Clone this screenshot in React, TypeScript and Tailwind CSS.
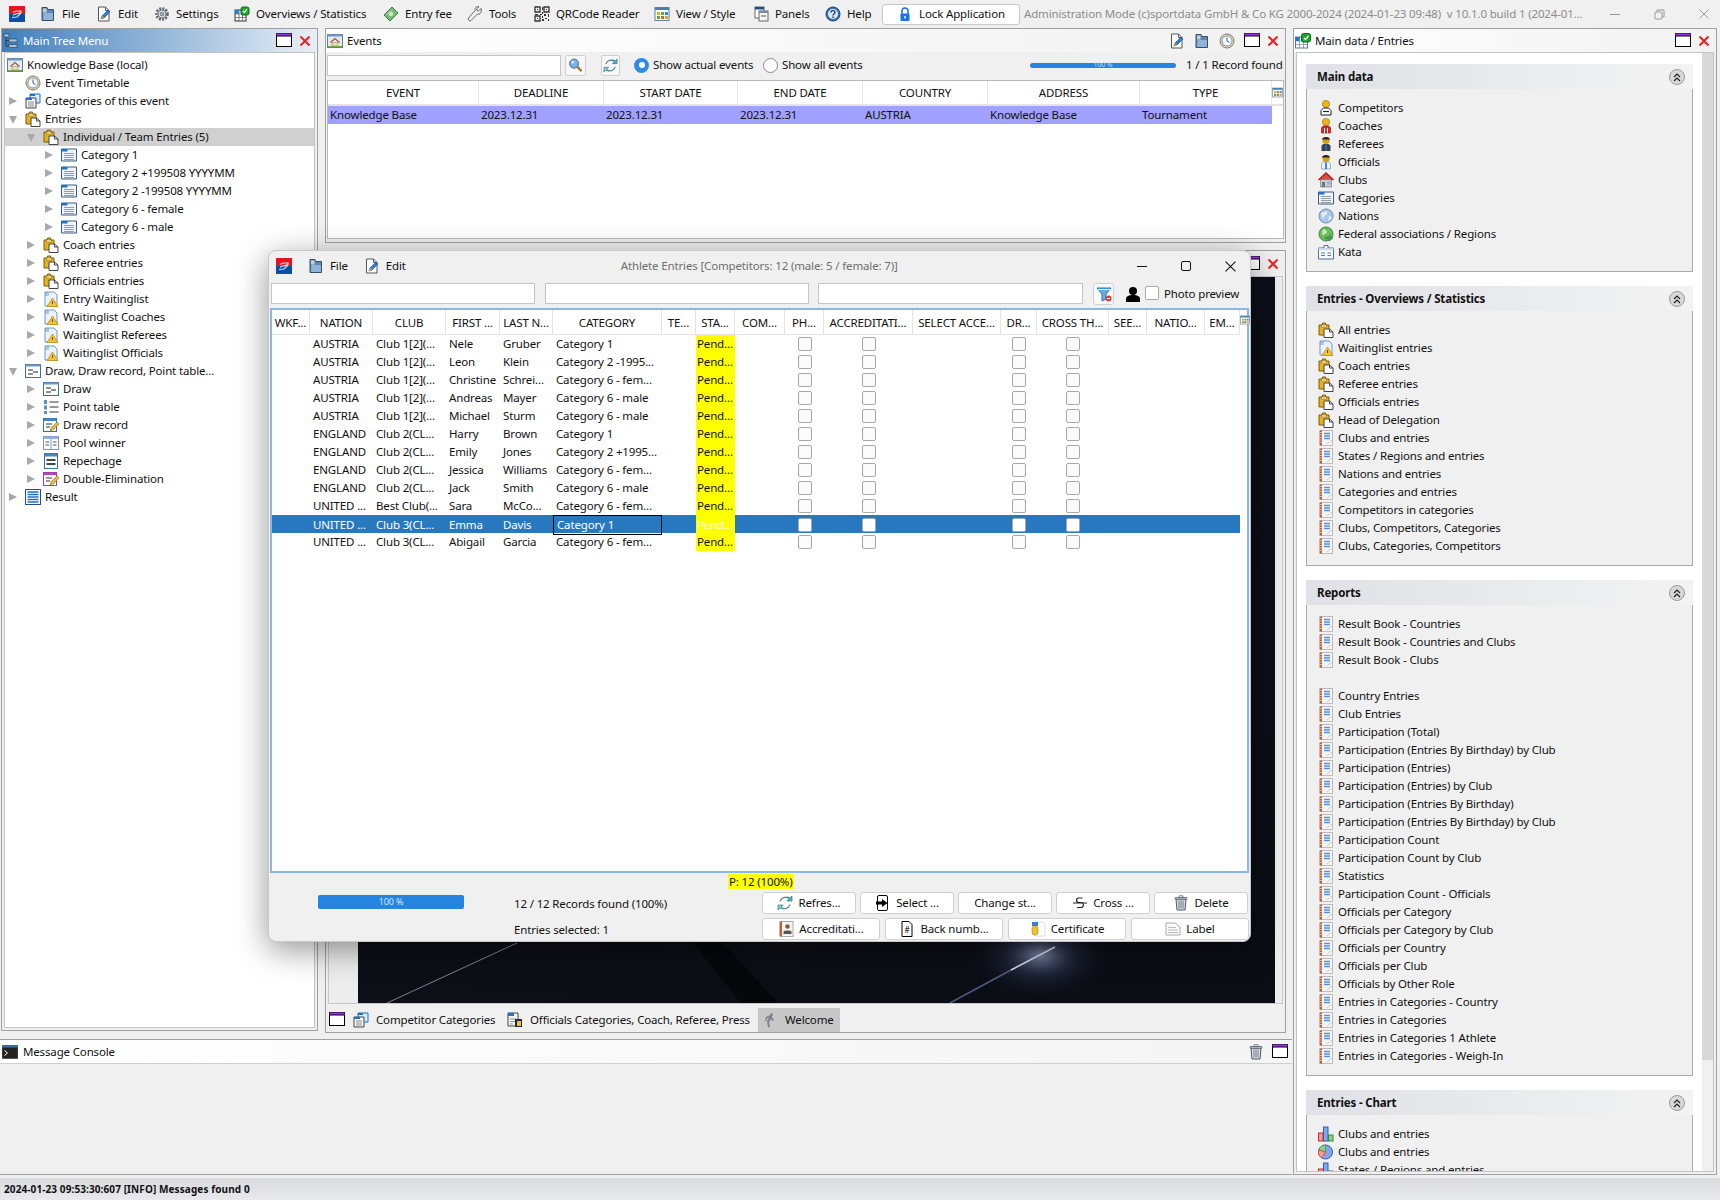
import type { ReactNode } from "react";

type IconName =
  | "logo" | "file" | "edit" | "gear" | "overview" | "money" | "wrench" | "qr" | "view" | "panels" | "help" | "lock"
  | "home" | "clock" | "cats" | "clip" | "cat" | "warn" | "draw" | "point" | "record" | "pool" | "repechage" | "double" | "result"
  | "tree" | "competitor" | "coach" | "referee" | "official" | "club" | "nation" | "federal" | "kata" | "report" | "bar" | "pie"
  | "console" | "trash" | "tile" | "search" | "refresh" | "filter" | "person" | "selectIn" | "cross" | "accred" | "back" | "medal" | "label" | "run" | "catCoach" | "mainData";

function Icon({ name, className = "h-4 w-4 shrink-0" }: { name: IconName; className?: string }) {
  const shapes: Record<IconName, ReactNode> = {
    logo: <><rect width="16" height="8" fill="#e8141c" /><rect y="8" width="16" height="8" fill="#0b4ea2" /><path d="M4 9l8-2.4V5L7 5 4 6.500M12 7 8 11l-5 .5" stroke="#d8dce4" strokeWidth="1.2" fill="none" /></>,
    file: <><path d="M2 1.500h5l1 2h5.500v11H2z" fill="#5d86b3" stroke="#3a4d63" /><path d="M3 2.500h3.500v4H3z" fill="#c9ced6" /><path d="M3.500 7h9.500v7H3z" fill="#8fb3d9" /></>,
    edit: <><path d="M2.500 1h7l3.500 3.500V15h-10.500z" fill="#fff" stroke="#555" /><path d="M9.500 1v3.500H13" fill="none" stroke="#555" /><path d="M5 13l1-3 6-6 2 2-6 6z" fill="#2f7fd8" stroke="#1d4f8c" strokeWidth=".6" /><path d="M5 13l1-3 2 2z" fill="#e6a73a" /></>,
    gear: <><circle cx="8" cy="8" r="5.500" fill="none" stroke="#5d6670" strokeWidth="2.600" strokeDasharray="2 1.200" /><circle cx="8" cy="8" r="4" fill="#eef0f2" stroke="#6d747c" /><circle cx="8" cy="8" r="2" fill="#aab0b6" stroke="#555" strokeWidth=".6" /></>,
    overview: <><rect x="1" y="4" width="11" height="11" fill="#fff" stroke="#333" /><path d="M1 8h11M1 11.500h11M5 4v11M8.500 4v11" stroke="#555" strokeWidth=".7" /><rect x="1" y="4" width="4" height="4" fill="#2e7fd6" /><rect x="7" y="1" width="8" height="8" rx="2" fill="#1fa62f" stroke="#0c6a18" /><path d="M9 5l1.500 1.500L13 3" stroke="#fff" fill="none" strokeWidth="1.200" /></>,
    money: <><path d="M1 9L9 1l6 6-8 8z" fill="#7cb77a" stroke="#3d7f45" /><circle cx="8" cy="8" r="2.200" fill="#cfe8c8" /><path d="M3.500 9 9 3.500" stroke="#cfe8c8" strokeWidth=".7" /></>,
    wrench: <path d="M14 2.500l-2.500 2.500-1.500-.5-.5-1.500L12 .8C9.500 0 7.500 2 8 4.500L1.500 12a1.800 1.800 0 0 0 2.500 2.500L10.500 8c2.500.7 4.500-1.500 3.500-5.500z" fill="#f2f2f2" stroke="#555" strokeWidth=".9" />,
    qr: <><path d="M1 1h5v5H1zM10 1h5v5h-5zM1 10h5v5H1z" fill="none" stroke="#333" strokeWidth="1.300" /><path d="M3 3h1v1H3zM12 3h1v1h-1zM3 12h1v1H3zM8 1h1v3H8zM8 6h1v2H8zM1 8h3v1H1zM6 8h2v1H6zM10 8h2v2h-2zM14 8h1v3h-1zM8 10h1v2H8zM11 12h2v1h-2zM8 13h2v2H8zM14 13h1v2h-1z" fill="#333" /></>,
    view: <><rect x="1" y="1.500" width="14" height="13" fill="#fff" stroke="#5d7fa6" /><rect x="1" y="1.500" width="14" height="2.500" fill="#4a7cb3" /><rect x="3" y="6" width="3" height="3" fill="#e0a92e" /><rect x="7" y="6" width="3" height="3" fill="#55a84f" /><rect x="11" y="6" width="3" height="3" fill="#4a84d0" /><rect x="3" y="10" width="3" height="3" fill="#55a84f" /><rect x="7" y="10" width="3" height="3" fill="#d25b4b" /><rect x="11" y="10" width="3" height="3" fill="#e0a92e" /></>,
    panels: <><rect x="2" y="1" width="9" height="11" fill="#fff" stroke="#666" /><rect x="2" y="1" width="9" height="2.500" fill="#1f4f86" /><rect x="6" y="5" width="9" height="10" fill="#f6f6f6" stroke="#666" /><rect x="6" y="5" width="9" height="2" fill="#7a8aa0" /><path d="M8 10h5" stroke="#555" /></>,
    help: <><circle cx="8" cy="8" r="7" fill="#3d74b8" stroke="#1d3f6e" /><circle cx="8" cy="8" r="5" fill="#d8e6f5" /><path d="M6 6.500c0-2.500 4-2.500 4 0 0 1.500-2 1.500-2 3" stroke="#1d3f6e" strokeWidth="1.400" fill="none" /><rect x="7.300" y="10.500" width="1.500" height="1.500" fill="#1d3f6e" /></>,
    lock: <><path d="M5 8V5a3 3 0 0 1 6 0v3" fill="none" stroke="#1a73e8" strokeWidth="1.500" /><rect x="3.500" y="7.500" width="9" height="7.500" rx="1" fill="#1a73e8" /><rect x="7.300" y="10" width="1.400" height="2.500" fill="#fff" /></>,
    home: <><rect x=".5" y="1.500" width="15" height="13" fill="#dfeaf5" stroke="#5d7fa6" /><rect x=".5" y="1.500" width="15" height="2" fill="#6f9ac8" /><path d="M3.500 9.500 8 5.500l4.500 4" fill="none" stroke="#b9522c" strokeWidth="1.300" /><path d="M5 9.500h6v3.500H5z" fill="#f1dfa8" stroke="#8a7a4a" strokeWidth=".5" /><path d="M1 13.500h14" stroke="#6bad56" /></>,
    clock: <><circle cx="8" cy="8" r="7" fill="#e4d6b8" stroke="#8a7a5a" /><circle cx="8" cy="8" r="5" fill="#fff" stroke="#6f9ac8" /><path d="M8 4.500V8l2.500 1.500" stroke="#2a5c99" fill="none" /></>,
    cats: <><path d="M5 1h10v9H5z" fill="#dce9f7" stroke="#1f74c9" /><path d="M5 1h5v2H5z" fill="#1f74c9" /><path d="M1 5h10v10H1z" fill="#f4f6f8" stroke="#444" /><path d="M1 5h6v2H1z" fill="#1f74c9" /><path d="M3 9h6M3 11h6M3 13h6" stroke="#777" strokeWidth=".8" /></>,
    clip: <><path d="M1 3h3l.5-2h3l.5 2h3v10H1z" fill="#e5b11e" stroke="#7d5e08" /><path d="M3.500 3h5v2h-5z" fill="#f7f2d8" stroke="#7d5e08" strokeWidth=".5" /><path d="M6 7h5.500L15 10v5.500H6z" fill="#fff" stroke="#444" /><path d="M11.500 7v3H15" fill="none" stroke="#444" /></>,
    cat: <><path d="M.5 2h15v12H.5z" fill="#eef4fa" stroke="#3a5f86" /><path d="M.5 2h6v2.500h-6z" fill="#1f74c9" /><path d="M3 6.500h10M3 8.500h10M3 10.500h10M3 12.500h10" stroke="#7a8794" strokeWidth=".8" /></>,
    warn: <><path d="M2 1h9l3 3v11H2z" fill="#eaf2fb" stroke="#6f9ac8" /><path d="M2 1h4v4H2z" fill="#6f9ac8" opacity=".5" /><path d="M9.500 7l5.500 8.500H4z" fill="#f4c430" stroke="#b5860c" strokeWidth=".7" /><path d="M9.500 10v3" stroke="#6d4d00" /></>,
    draw: <><rect x=".5" y="1.500" width="15" height="13" fill="#fff" stroke="#3a6ea5" /><rect x=".5" y="1.500" width="15" height="2" fill="#6f9ac8" /><path d="M3 7h5M3 11h5M8 9h5" stroke="#222" strokeWidth="1.200" /></>,
    point: <><path d="M6.500 3h9M6.500 8h9M6.500 13h9" stroke="#333" strokeWidth="1.100" /><path d="M1 1h3v4H1zM1 6.500h3v4H1zM1 12h3v3H1z" fill="#5b8fd0" /></>,
    record: <><rect x=".5" y="1.500" width="13" height="13" fill="#fff" stroke="#3a6ea5" /><rect x=".5" y="1.500" width="13" height="2.500" fill="#4a84c4" /><path d="M3 7h6M3 10h4" stroke="#333" /><path d="M7 14l1-3 6-6 2 2-6 6z" fill="#e9b83a" stroke="#9a7312" strokeWidth=".6" /></>,
    pool: <><rect x=".5" y="1.500" width="15" height="13" fill="#fff" stroke="#6f9ac8" /><rect x=".5" y="1.500" width="15" height="2.500" fill="#8fb3d9" /><path d="M8 4v10" stroke="#6f9ac8" /><path d="M2.500 7h3.500M2.500 10h3.500M10 7h3.500M10 10h3.500" stroke="#555" /></>,
    repechage: <><rect x="1.500" y=".5" width="13" height="15" fill="#fff" stroke="#3a6ea5" /><rect x="1.500" y=".5" width="13" height="3" fill="#4a84c4" /><path d="M3.500 7h9M3.500 11h9" stroke="#444" strokeWidth="2" /></>,
    double: <><rect x=".5" y="1.500" width="13" height="13" fill="#fff" stroke="#a13ea8" /><rect x=".5" y="1.500" width="13" height="2.500" fill="#b83fc0" /><path d="M3 7h6M3 10h4" stroke="#333" /><path d="M7 14l1-3 6-6 2 2-6 6z" fill="#e9b83a" stroke="#9a7312" strokeWidth=".6" /></>,
    result: <><rect x=".5" y=".5" width="15" height="15" fill="#fff" stroke="#1f4f86" /><path d="M2.500 3h11M2.500 5.500h11M2.500 8h11M2.500 10.500h11M2.500 13h11" stroke="#1f74c9" strokeWidth="1.400" /></>,
    tree: <><rect x="1" y="1" width="5" height="3" fill="#a9c2dc" stroke="#22384f" strokeWidth=".6" /><rect x="6" y="6" width="8" height="3" fill="#a9c2dc" stroke="#22384f" strokeWidth=".6" /><rect x="6" y="11.500" width="8" height="3" fill="#a9c2dc" stroke="#22384f" strokeWidth=".6" /><path d="M3 4v9h3M3 7.500h3" stroke="#22384f" fill="none" /></>,
    competitor: <><circle cx="8" cy="4" r="3.600" fill="#edb612" stroke="#8a6a00" strokeWidth=".6" /><path d="M3 15v-4.500L5.500 8h5L13 10.500V15z" fill="#fff" stroke="#222" /><path d="M5 11.500h6" stroke="#222" strokeWidth="1.200" /></>,
    coach: <><circle cx="8" cy="4" r="3.600" fill="#edb612" stroke="#8a6a00" strokeWidth=".6" /><path d="M3.500 15V9.500L5.500 8h5l2 1.500V15z" fill="#d9261c" stroke="#7a120c" strokeWidth=".6" /><path d="M6.500 10v5M9.500 10v5" stroke="#fff" /></>,
    referee: <><circle cx="8" cy="4.500" r="3.600" fill="#d4a017" /><path d="M4 3.500c0-3.500 8-3.500 8 0z" fill="#222" /><path d="M3.500 15V9.500L5.500 8h5l2 1.500V15z" fill="#3c4048" /><path d="M8 8.500v6.500" stroke="#1f74c9" strokeWidth="1.600" /></>,
    official: <><circle cx="8" cy="4.500" r="3.600" fill="#d4a017" /><path d="M4 3.500c0-3.500 8-3.500 8 0z" fill="#222" /><path d="M3.500 15V9.500L5.500 8h5l2 1.500V15z" fill="#eaf1f8" stroke="#6f8296" strokeWidth=".6" /><path d="M8 8.500v6.500" stroke="#1f74c9" strokeWidth="1.600" /></>,
    club: <><path d="M.5 8 8 1l7.500 7" fill="#e04a3a" stroke="#b0201a" strokeWidth="1.300" /><path d="M2.500 7.500h11V15h-11z" fill="#c9ccd0" stroke="#666" strokeWidth=".6" /><rect x="4" y="10" width="3" height="5" fill="#6d7680" /><rect x="9" y="9.500" width="3.500" height="3" fill="#8fb3d9" /></>,
    nation: <><circle cx="8" cy="8" r="7" fill="#a9c8ea" stroke="#6b8cae" /><path d="M4 4c2 1 3 0 4-1 2 1 1 3 0 4-2 0-3 2-2 4-2-1-3-4-2-7zM11 8c2 0 3 1 2.500 2-1 2-2 2.500-3 3 0-2 .5-3 .5-5z" fill="#e8eef6" /></>,
    federal: <><circle cx="8" cy="8" r="7" fill="#6cbb5c" stroke="#3d8a40" /><path d="M5 3c2 0 4 1 4 3s-3 2-4 3-1-4 0-6z" fill="#c7e6ba" /><path d="M7.500 11h4V9l3.500 3-3.500 3v-2h-4z" fill="#4aa04e" stroke="#2f7a34" strokeWidth=".5" /></>,
    kata: <><path d="M.5 4h15v11H.5z" fill="#f6f8fb" stroke="#526f8e" /><path d="M6 4V1.500h4V4" fill="#fff" stroke="#526f8e" /><path d="M.5 4h15v2H.5z" fill="#c7d8ea" /><path d="M3 9h4M3 11.500h4M9.500 9h3.500M9.500 11.500h3.500" stroke="#5d7fa6" /></>,
    report: <><rect x="2.500" y=".5" width="12" height="15" fill="#f4f4f4" stroke="#bbb" /><rect x="1.500" y=".5" width="2.500" height="15" fill="#b8623a" /><path d="M1.500 2.500h2.500M1.500 5h2.500M1.500 7.500h2.500M1.500 10h2.500M1.500 12.500h2.500" stroke="#f2e3d8" strokeWidth=".7" /><path d="M6 3.500h6M6 6h6M6 8.500h6" stroke="#5b8fd0" strokeWidth="1.300" /><path d="M9 14l5-4" stroke="#ccc" /></>,
    bar: <><rect x=".5" y="7" width="4.500" height="8" fill="#f59a95" stroke="#d9261c" /><rect x="5.500" y="1" width="4.500" height="14" fill="#7fa8e8" stroke="#2a5fc0" /><rect x="10.500" y="9" width="4.500" height="6" fill="#8fce8a" stroke="#2f8a34" /></>,
    pie: <><circle cx="7.500" cy="8" r="7" fill="#7fa8e8" stroke="#2a5fc0" /><path d="M7.500 8V1A7 7 0 0 0 .8 6z" fill="#8fce8a" stroke="#2f8a34" strokeWidth=".6" /><path d="M7.500 8 .8 6a7 7 0 0 0 3 8z" fill="#f59a95" stroke="#d9261c" strokeWidth=".6" /></>,
    console: <><rect y="1.500" width="16" height="13" rx="1" fill="#222" stroke="#555" /><rect y="1.500" width="16" height="2" fill="#3a6ea5" /><path d="M2.500 6.500l3 2.500-3 2.500" stroke="#fff" fill="none" /></>,
    trash: <><path d="M3 4h10l-1 11H4z" fill="#dde1e6" stroke="#4c5560" /><rect x="2" y="2.500" width="12" height="1.800" rx=".6" fill="#b9c0c8" stroke="#4c5560" strokeWidth=".7" /><path d="M6 .8h4v1.700H6z" fill="#fff" stroke="#4c5560" strokeWidth=".7" /><path d="M6 5.500v8M8 5.500v8M10 5.500v8" stroke="#6d7680" /></>,
    tile: <><rect x=".5" y=".5" width="15" height="13" fill="#fff" stroke="#000" /><rect x=".5" y=".5" width="15" height="2.500" fill="#9a35e8" /><path d="M.5 3h15" stroke="#000" /></>,
    search: <><circle cx="6.500" cy="6" r="4.800" fill="#7fb0ea" stroke="#345f92" /><circle cx="5" cy="4.500" r="1.500" fill="#dbe9f9" /><path d="M10 9.500l4.500 4.500" stroke="#9a7b2e" strokeWidth="2.400" /></>,
    refresh: <><path d="M3 6.500A5 5 0 0 1 12 4.500L10 6h5V1l-1.700 2A7 7 0 0 0 3 6.500z" fill="#57b3cb" stroke="#1f5f74" strokeWidth=".6" /><path d="M13 9.500A5 5 0 0 1 4 11.500L6 10H1v5l1.700-2A7 7 0 0 0 13 9.500z" fill="#8dd0e2" stroke="#1f5f74" strokeWidth=".6" /></>,
    filter: <><path d="M1 2h14l-5 6v5l-4 2V8z" fill="#5fb0ea" stroke="#1f74c9" /><path d="M2 3.500h12" stroke="#e5f1fb" /><circle cx="12.500" cy="12.500" r="3" fill="#e43a30" /><path d="M11 12.500h3" stroke="#fff" /></>,
    person: <><circle cx="8" cy="5" r="4" fill="#000" /><path d="M1 16v-3c0-3 3-4 7-4s7 1 7 4v3z" fill="#000" /></>,
    selectIn: <><rect x="2.500" y=".5" width="10" height="15" rx="1.500" fill="#fff" stroke="#000" /><path d="M1 6.500h6V4l5.500 4L7 12V9.500H1z" fill="#000" /></>,
    cross: <><path d="M10.500 3H6.500C4 3 4 7.500 6.500 7.500h3c2.500 0 2.500 5-.5 5H5" fill="none" stroke="#222" strokeWidth="1.200" /><path d="M1 8h14" stroke="#222" /></>,
    accred: <><rect x="3" y=".5" width="12" height="15" fill="#f4f4f4" stroke="#aaa" /><rect x="1.500" y=".5" width="2.500" height="15" fill="#b8623a" /><circle cx="9.500" cy="5.500" r="2.300" fill="#8a5a3a" /><path d="M5.500 13v-2.500c0-1.500 8-1.500 8 0V13z" fill="#555" /></>,
    back: <><path d="M3 .5h7l3 3v12H3z" fill="#fff" stroke="#000" /><text x="8" y="11.500" textAnchor="middle" fontSize="8" fill="#000">#</text></>,
    medal: <><path d="M5 1h8l2 2v12H5z" fill="#fff" stroke="#ddd" /><rect x="2" y="1" width="6" height="4" fill="#3a7fc8" /><rect x="2" y="5" width="6" height="9" rx="3" fill="#f2c230" stroke="#a88312" strokeWidth=".6" /></>,
    label: <><path d="M1 2h9l5 4v8H1z" fill="#fafafa" stroke="#aaa" /><path d="M3 6.500h8M3 9h10M3 11.500h10" stroke="#bbb" /></>,
    run: <path d="M8 1l2 1-1 3 2 3-2 1-1-2-2 3 1 5-2 .5-1-6 2-4-2 1-1 3-1-.5 1-4 4-2z" fill="#7e858d" />,
    catCoach: <><path d="M1 1h10v13H1z" fill="#f2f4f7" stroke="#444" /><path d="M1 1h6v3H1z" fill="#1f74c9" /><path d="M3 7h6M3 9.500h6M3 12h3" stroke="#777" strokeWidth=".8" /><rect x="8" y="7" width="7" height="8" fill="#1f2a38" /><rect x="10" y="9" width="4" height="5" fill="#f0c419" /></>,
    mainData: <><rect x=".5" y="4" width="12" height="11" fill="#fff" stroke="#5b7a9b" /><path d="M.5 8h12M.5 11.500h12M4.500 4v11M8.500 4v11" stroke="#5b7a9b" strokeWidth=".6" /><rect x=".5" y="4" width="4" height="4" fill="#1f74c9" /><rect x="6.500" y=".5" width="9" height="8.500" rx="2" fill="#1fa62f" stroke="#0c6a18" /><path d="M9 5l1.500 1.500L13.500 3" stroke="#fff" fill="none" strokeWidth="1.200" /></>,
  };
  return (
    <svg viewBox="0 0 16 16" className={className} aria-hidden="true">
      {shapes[name]}
    </svg>
  );
}

function CloseX({ className = "" }: { className?: string }) {
  return (
    <svg viewBox="0 0 12 12" className={`h-3 w-3 shrink-0 ${className}`} aria-hidden="true">
      <path d="M1.500 1.500l9 9M10.500 1.500l-9 9" stroke="#ef2020" strokeWidth="2" />
    </svg>
  );
}

const menu: { icon: IconName; label: string; width: string }[] = [
  { icon: "file", label: "File", width: "w-[56px]" },
  { icon: "edit", label: "Edit", width: "w-[58px]" },
  { icon: "gear", label: "Settings", width: "w-[80px]" },
  { icon: "overview", label: "Overviews / Statistics", width: "w-[149px]" },
  { icon: "money", label: "Entry fee", width: "w-[84px]" },
  { icon: "wrench", label: "Tools", width: "w-[67px]" },
  { icon: "qr", label: "QRCode Reader", width: "w-[120px]" },
  { icon: "view", label: "View / Style", width: "w-[99px]" },
  { icon: "panels", label: "Panels", width: "w-[72px]" },
  { icon: "help", label: "Help", width: "w-[57px]" },
];

function Toolbar() {
  return (
    <div className="flex h-[28px] shrink-0 items-center bg-[#f0f0f0] pl-[8px]">
      <Icon name="logo" className="mr-[14px] h-[16px] w-[18px] shrink-0" />
      {menu.map((item) => (
        <div key={item.label} className={`flex items-center gap-[6px] ${item.width}`}>
          <Icon name={item.icon} />
          <span className="whitespace-nowrap">{item.label}</span>
        </div>
      ))}
      <div className="flex h-[21px] w-[138px] shrink-0 items-center justify-center gap-[6px] rounded-[3px] border border-[#c8c8c8] bg-white">
        <Icon name="lock" />
        <span>Lock Application</span>
      </div>
      <span className="ml-[4px] w-[566px] shrink-0 whitespace-nowrap text-[#8c8c8c]">
        Administration Mode (c)sportdata GmbH &amp; Co KG 2000-2024 (2024-01-23 09:48)&nbsp; v 10.1.0 build 1 (2024-01...
      </span>
      <div className="ml-[20px] flex items-center gap-[34px]">
        <span className="h-px w-[10px] bg-[#999]" />
        <svg viewBox="0 0 11 11" className="h-[11px] w-[11px]" aria-hidden="true">
          <path d="M3 2.500V1h7v7H8.500" fill="none" stroke="#999" />
          <rect x="1" y="3" width="7" height="7" rx="1" fill="none" stroke="#999" />
        </svg>
        <svg viewBox="0 0 10 10" className="h-[10px] w-[10px]" aria-hidden="true">
          <path d="M.5.500l9 9M9.500.500l-9 9" stroke="#999" />
        </svg>
      </div>
    </div>
  );
}

function PanelHeader({ icon, title, blue, children }: { icon: IconName; title: string; blue?: boolean; children?: ReactNode }) {
  return (
    <div
      className={`flex h-[23px] shrink-0 items-center pl-[1px] ${
        blue
          ? "bg-gradient-to-r from-[#3f7fbc] to-[#e9eff6] text-white"
          : "bg-gradient-to-r from-white via-[#f8f8f8] to-[#f2f2f2]"
      }`}
    >
      <Icon name={icon} />
      <span className="ml-[4px] flex-1 whitespace-nowrap">{title}</span>
      {children}
    </div>
  );
}

function TileClose() {
  return (
    <div className="flex items-center gap-[7px] pr-[6px]">
      <Icon name="tile" />
      <CloseX />
    </div>
  );
}

type TreeRow = { label: string; icon: IconName; depth: number; arrow?: "closed" | "open"; selected?: boolean };

const tree: TreeRow[] = [
  { label: "Knowledge Base (local)", icon: "home", depth: -1 },
  { label: "Event Timetable", icon: "clock", depth: 0 },
  { label: "Categories of this event", icon: "cats", depth: 0, arrow: "closed" },
  { label: "Entries", icon: "clip", depth: 0, arrow: "open" },
  { label: "Individual / Team Entries (5)", icon: "clip", depth: 1, arrow: "open", selected: true },
  { label: "Category 1", icon: "cat", depth: 2, arrow: "closed" },
  { label: "Category 2 +199508 YYYYMM", icon: "cat", depth: 2, arrow: "closed" },
  { label: "Category 2 -199508 YYYYMM", icon: "cat", depth: 2, arrow: "closed" },
  { label: "Category 6 - female", icon: "cat", depth: 2, arrow: "closed" },
  { label: "Category 6 - male", icon: "cat", depth: 2, arrow: "closed" },
  { label: "Coach entries", icon: "clip", depth: 1, arrow: "closed" },
  { label: "Referee entries", icon: "clip", depth: 1, arrow: "closed" },
  { label: "Officials entries", icon: "clip", depth: 1, arrow: "closed" },
  { label: "Entry Waitinglist", icon: "warn", depth: 1, arrow: "closed" },
  { label: "Waitinglist Coaches", icon: "warn", depth: 1, arrow: "closed" },
  { label: "Waitinglist Referees", icon: "warn", depth: 1, arrow: "closed" },
  { label: "Waitinglist Officials", icon: "warn", depth: 1, arrow: "closed" },
  { label: "Draw, Draw record, Point table...", icon: "draw", depth: 0, arrow: "open" },
  { label: "Draw", icon: "draw", depth: 1, arrow: "closed" },
  { label: "Point table", icon: "point", depth: 1, arrow: "closed" },
  { label: "Draw record", icon: "record", depth: 1, arrow: "closed" },
  { label: "Pool winner", icon: "pool", depth: 1, arrow: "closed" },
  { label: "Repechage", icon: "repechage", depth: 1, arrow: "closed" },
  { label: "Double-Elimination", icon: "double", depth: 1, arrow: "closed" },
  { label: "Result", icon: "result", depth: 0, arrow: "closed" },
];

const indents: Record<string, string> = { "-1": "pl-[2px]", "0": "pl-[20px]", "1": "pl-[38px]", "2": "pl-[56px]" };

function Arrow({ open }: { open?: boolean }) {
  return open ? (
    <span className="absolute left-[-16px] top-[6px] h-0 w-0 border-x-[4.500px] border-t-[8px] border-x-transparent border-t-[#a8a8a8]" />
  ) : (
    <span className="absolute left-[-16px] top-[5px] h-0 w-0 border-y-[4.500px] border-l-[8px] border-y-transparent border-l-[#a8a8a8]" />
  );
}

function MainTree() {
  return (
    <div className="flex h-[1003px] w-[317px] shrink-0 flex-col border border-[#a0a0a0] bg-[#f0f0f0]">
      <PanelHeader icon="tree" title="Main Tree Menu" blue>
        <TileClose />
      </PanelHeader>
      <div className="mx-[2px] mb-[2px] flex-1 border border-[#c4c4c4] bg-white pt-[3px]">
        {tree.map((row) => (
          <div key={row.label + row.depth} className={`flex h-[18px] items-center ${indents[String(row.depth)]} ${row.selected ? "bg-[#d0d0d0]" : ""}`}>
            <div className="relative flex items-center gap-[4px]">
              {row.arrow ? <Arrow open={row.arrow === "open"} /> : null}
              <Icon name={row.icon} />
              <span className="whitespace-nowrap">{row.label}</span>
            </div>
          </div>
        ))}
      </div>
    </div>
  );
}

const eventCols = "grid-cols-[151px_125px_134px_125px_125px_152px_132px_11px]";

function EventsPanel() {
  return (
    <div className="flex h-[215px] shrink-0 flex-col border border-[#a0a0a0] bg-[#f0f0f0]">
      <PanelHeader icon="home" title="Events">
        <div className="flex items-center gap-[9px]">
          <Icon name="edit" />
          <Icon name="file" />
          <Icon name="clock" />
          <TileClose />
        </div>
      </PanelHeader>
      <div className="flex h-[26px] shrink-0 items-center pl-[1px]">
        <div className="h-[21px] w-[234px] border border-[#c4c4c4] bg-white" />
        <div className="ml-[4px] flex h-[21px] w-[21px] items-center justify-center rounded-[2px] border border-[#d0d0d0] bg-[#f8f8f8]">
          <Icon name="search" className="h-[15px] w-[15px]" />
        </div>
        <div className="ml-[15px] flex h-[21px] w-[19px] items-center justify-center rounded-[2px] border border-[#d0d0d0] bg-[#f8f8f8]">
          <Icon name="refresh" className="h-[15px] w-[15px]" />
        </div>
        <span className="ml-[14px] flex h-[15px] w-[15px] items-center justify-center rounded-full bg-[#2f8be6]">
          <span className="h-[6px] w-[6px] rounded-full bg-white" />
        </span>
        <span className="ml-[4px] w-[110px] whitespace-nowrap">Show actual events</span>
        <span className="h-[15px] w-[15px] rounded-full border border-[#8a8a8a] bg-white" />
        <span className="ml-[4px] w-[248px] whitespace-nowrap">Show all events</span>
        <div className="relative h-[5px] w-[146px] rounded-full bg-[#2484e0]">
          <span className="absolute inset-x-0 top-[-3px] text-center text-[7px] leading-[10px] text-[#c8dcf2]">100 %</span>
        </div>
        <span className="ml-[10px] whitespace-nowrap">1 / 1 Record found</span>
      </div>
      <div className="mx-[1px] mb-[3px] mt-[2px] flex-1 border border-[#b8b8b8] bg-white">
        <div className={`grid h-[25px] items-center border-b-2 border-[#e4e4e4] ${eventCols}`}>
          {["EVENT", "DEADLINE", "START DATE", "END DATE", "COUNTRY", "ADDRESS", "TYPE"].map((h) => (
            <div key={h} className="flex h-full items-center justify-center border-r border-[#e6e6e6]">{h}</div>
          ))}
          <Icon name="view" className="h-[11px] w-[11px]" />
        </div>
        <div className={`grid h-[18px] items-center ${eventCols}`}>
          {["Knowledge Base", "2023.12.31", "2023.12.31", "2023.12.31", "AUSTRIA", "Knowledge Base", "Tournament"].map((c, i) => (
            <div key={i} className="flex h-full items-center bg-[#a0a0ff] pl-[2px]">{c}</div>
          ))}
        </div>
      </div>
    </div>
  );
}

function DarkBackdrop() {
  return (
    <svg viewBox="0 0 917 726" preserveAspectRatio="none" className="h-full w-full" aria-hidden="true">
      <defs>
        <radialGradient id="flare" cx="50%" cy="50%" r="50%">
          <stop offset="0%" stopColor="#97a6cc" stopOpacity=".8" />
          <stop offset="45%" stopColor="#3d4a70" stopOpacity=".35" />
          <stop offset="100%" stopColor="#0b0d14" stopOpacity="0" />
        </radialGradient>
        <linearGradient id="dark" x1="0" y1="0" x2="1" y2="1">
          <stop offset="0%" stopColor="#0e1119" />
          <stop offset="100%" stopColor="#0b0d15" />
        </linearGradient>
      </defs>
      <rect width="917" height="726" fill="url(#dark)" />
      <path d="M335 666 L383 726 L420 726 L365 666z" fill="#06070b" />
      <ellipse cx="682" cy="678" rx="75" ry="46" fill="url(#flare)" />
      <path d="M29 726 L159 666" stroke="#7e8390" strokeWidth="1" />
      <path d="M592 726 L653 693" stroke="#4f5c80" strokeWidth="1.500" />
      <path d="M653 693 L697 670" stroke="#d5dbec" strokeWidth="1.500" />
    </svg>
  );
}

function WelcomePanel() {
  return (
    <div className="mt-[7px] flex flex-1 flex-col border border-[#a0a0a0] bg-[#f0f0f0]">
      <div className="flex h-[25px] shrink-0 items-center justify-end">
        <TileClose />
      </div>
      <div className="mx-[2px] mb-[4px] flex flex-1 border border-[#c8c8c8] bg-[#ededed]">
        <div className="w-[29px] shrink-0" />
        <div className="flex-1">
          <DarkBackdrop />
        </div>
        <div className="w-[7px] shrink-0" />
      </div>
      <div className="flex h-[24px] shrink-0 items-center pl-[3px]">
        <Icon name="tile" className="mr-[8px] h-4 w-4 shrink-0" />
        <Icon name="cats" />
        <span className="ml-[7px] w-[131px] whitespace-nowrap">Competitor Categories</span>
        <Icon name="catCoach" />
        <span className="ml-[7px] w-[228px] whitespace-nowrap">Officials Categories, Coach, Referee, Press</span>
        <div className="flex h-full w-[82px] items-center bg-[#c8c8c8] pl-[5px]">
          <Icon name="run" />
          <span className="ml-[6px] whitespace-nowrap">Welcome</span>
        </div>
      </div>
    </div>
  );
}

function ConsolePanel() {
  return (
    <div className="mt-[6px] flex h-[136px] shrink-0 flex-col border-y border-[#a0a0a0] bg-[#f0f0f0]">
      <div className="flex h-[24px] shrink-0 items-center border-b border-[#d0d0d0] bg-gradient-to-r from-white to-[#f4f4f4] pl-[2px]">
        <Icon name="console" />
        <span className="ml-[5px] flex-1">Message Console</span>
        <div className="flex items-center gap-[8px] pr-[4px]">
          <Icon name="trash" />
          <Icon name="tile" />
        </div>
      </div>
    </div>
  );
}

type Section = { title: string; items: ({ label: string; icon: IconName } | null)[] };

const rep = (label: string) => ({ label, icon: "report" as IconName });

const sections: Section[] = [
  {
    title: "Main data",
    items: [
      { label: "Competitors", icon: "competitor" },
      { label: "Coaches", icon: "coach" },
      { label: "Referees", icon: "referee" },
      { label: "Officials", icon: "official" },
      { label: "Clubs", icon: "club" },
      { label: "Categories", icon: "cat" },
      { label: "Nations", icon: "nation" },
      { label: "Federal associations / Regions", icon: "federal" },
      { label: "Kata", icon: "kata" },
    ],
  },
  {
    title: "Entries - Overviews / Statistics",
    items: [
      { label: "All entries", icon: "clip" },
      { label: "Waitinglist entries", icon: "warn" },
      { label: "Coach entries", icon: "clip" },
      { label: "Referee entries", icon: "clip" },
      { label: "Officials entries", icon: "clip" },
      { label: "Head of Delegation", icon: "clip" },
      rep("Clubs and entries"),
      rep("States / Regions and entries"),
      rep("Nations and entries"),
      rep("Categories and entries"),
      rep("Competitors in categories"),
      rep("Clubs, Competitors, Categories"),
      rep("Clubs, Categories, Competitors"),
    ],
  },
  {
    title: "Reports",
    items: [
      rep("Result Book - Countries"),
      rep("Result Book - Countries and Clubs"),
      rep("Result Book - Clubs"),
      null,
      rep("Country Entries"),
      rep("Club Entries"),
      rep("Participation (Total)"),
      rep("Participation (Entries By Birthday) by Club"),
      rep("Participation (Entries)"),
      rep("Participation (Entries) by Club"),
      rep("Participation (Entries By Birthday)"),
      rep("Participation (Entries By Birthday) by Club"),
      rep("Participation Count"),
      rep("Participation Count by Club"),
      rep("Statistics"),
      rep("Participation Count - Officials"),
      rep("Officials per Category"),
      rep("Officials per Category by Club"),
      rep("Officials per Country"),
      rep("Officials per Club"),
      rep("Officials by Other Role"),
      rep("Entries in Categories - Country"),
      rep("Entries in Categories"),
      rep("Entries in Categories 1 Athlete"),
      rep("Entries in Categories - Weigh-In"),
    ],
  },
  {
    title: "Entries - Chart",
    items: [
      { label: "Clubs and entries", icon: "bar" },
      { label: "Clubs and entries", icon: "pie" },
      { label: "States / Regions and entries", icon: "bar" },
    ],
  },
];

function RightPanel() {
  return (
    <div className="ml-[1px] flex h-[1147px] w-[424px] shrink-0 flex-col border border-[#a0a0a0] bg-[#f0f0f0]">
      <PanelHeader icon="mainData" title="Main data / Entries">
        <TileClose />
      </PanelHeader>
      <div className="mx-[2px] mb-[2px] flex min-h-0 flex-1 border border-[#c4c4c4] bg-white">
        <div className="flex-1 overflow-hidden px-[9px] pt-[11px]">
          {sections.map((s) => (
            <div key={s.title} className="mb-[14px]">
              <div className="flex h-[25px] items-center bg-gradient-to-r from-[#dfe1e6] to-[#f3f3f3] pl-[11px] pr-[8px]">
                <span className="flex-1 font-bold">{s.title}</span>
                <span className="flex h-[16px] w-[16px] items-center justify-center rounded-full border border-[#9a9a9a] bg-[#d8d8d8]">
                  <svg viewBox="0 0 10 10" className="h-[10px] w-[10px]" aria-hidden="true">
                    <path d="M2 5l3-3 3 3M2 9l3-3 3 3" stroke="#222" strokeWidth="1.200" fill="none" />
                  </svg>
                </span>
              </div>
              <div className="border-x border-b border-[#aaa] bg-[#f0f0f0] pb-[10px] pl-[11px] pt-[10px]">
                {s.items.map((item, i) => (
                  <div key={i} className="flex h-[18px] items-center gap-[4px]">
                    {item ? (
                      <>
                        <Icon name={item.icon} />
                        <span className="whitespace-nowrap">{item.label}</span>
                      </>
                    ) : null}
                  </div>
                ))}
              </div>
            </div>
          ))}
        </div>
        <div className="w-[11px] shrink-0 bg-[#f0f0f0]">
          <div className="h-[1007px] bg-[#d8d8d8]" />
        </div>
      </div>
    </div>
  );
}

const gridCols = "grid-cols-[38px_63px_73px_54px_53px_109px_34px_39px_50px_39px_89px_88px_36px_72px_38px_58px_35px]";

const headers = ["WKF...", "NATION", "CLUB", "FIRST ...", "LAST N...", "CATEGORY", "TE...", "STA...", "COM...", "PH...", "ACCREDITATI...", "SELECT ACCE...", "DR...", "CROSS TH...", "SEE...", "NATIO...", "EM..."];

const athletes = [
  ["AUSTRIA", "Club 1[2](...", "Nele", "Gruber", "Category 1"],
  ["AUSTRIA", "Club 1[2](...", "Leon", "Klein", "Category 2 -1995..."],
  ["AUSTRIA", "Club 1[2](...", "Christine", "Schrei...", "Category 6 - fem..."],
  ["AUSTRIA", "Club 1[2](...", "Andreas", "Mayer", "Category 6 - male"],
  ["AUSTRIA", "Club 1[2](...", "Michael", "Sturm", "Category 6 - male"],
  ["ENGLAND", "Club 2(CL...", "Harry", "Brown", "Category 1"],
  ["ENGLAND", "Club 2(CL...", "Emily", "Jones", "Category 2 +1995..."],
  ["ENGLAND", "Club 2(CL...", "Jessica", "Williams", "Category 6 - fem..."],
  ["ENGLAND", "Club 2(CL...", "Jack", "Smith", "Category 6 - male"],
  ["UNITED ...", "Best Club(...", "Sara", "McCo...", "Category 6 - fem..."],
  ["UNITED ...", "Club 3(CL...", "Emma", "Davis", "Category 1"],
  ["UNITED ...", "Club 3(CL...", "Abigail", "Garcia", "Category 6 - fem..."],
];

function CheckCell({ selected }: { selected: boolean }) {
  return (
    <div className="flex h-full items-center justify-center">
      <span className={`h-[14px] w-[14px] rounded-[2px] border border-[#a8a8a8] ${selected ? "bg-white" : "bg-[#fbfbfb]"}`} />
    </div>
  );
}

function AthleteRow({ cells, selected }: { cells: string[]; selected: boolean }) {
  return (
    <div className={`grid h-[18px] w-[968px] items-center ${gridCols} ${selected ? "bg-[#2878c0] text-white" : ""}`}>
      <div />
      {cells.map((c, i) => (
        <div
          key={i}
          className={`flex h-full items-center whitespace-nowrap pl-[3px] ${selected && i === 4 ? "border border-black" : ""}`}
        >
          {c}
        </div>
      ))}
      <div />
      <div className={`flex h-full items-center bg-[#ffff00] pl-[1px] ${selected ? "text-white" : ""}`}>Pend...</div>
      <div />
      <CheckCell selected={selected} />
      <CheckCell selected={selected} />
      <div />
      <CheckCell selected={selected} />
      <CheckCell selected={selected} />
    </div>
  );
}

const buttonsTop: { label: string; icon?: IconName }[] = [
  { label: "Refres...", icon: "refresh" },
  { label: "Select ...", icon: "selectIn" },
  { label: "Change st..." },
  { label: "Cross ...", icon: "cross" },
  { label: "Delete", icon: "trash" },
];

const buttonsBottom: { label: string; icon: IconName }[] = [
  { label: "Accreditati...", icon: "accred" },
  { label: "Back numb...", icon: "back" },
  { label: "Certificate", icon: "medal" },
  { label: "Label", icon: "label" },
];

function WinButton({ label, icon, width }: { label: string; icon?: IconName; width: string }) {
  return (
    <div className={`flex h-[22px] items-center justify-center gap-[5px] rounded-[3px] border border-[#d0d0d0] bg-white ${width}`}>
      {icon ? <Icon name={icon} /> : null}
      <span className="whitespace-nowrap">{label}</span>
    </div>
  );
}

function AthleteWindow() {
  return (
    <div className="absolute left-[268px] top-[250px] flex h-[692px] w-[983px] flex-col rounded-[8px] border border-[#c8c8c8] bg-[#f0f0f0] shadow-[0_8px_32px_rgba(0,0,0,0.42)]">
      <div className="flex h-[30px] shrink-0 items-center pl-[7px]">
        <Icon name="logo" />
        <Icon name="file" className="ml-[16px] h-4 w-4" />
        <span className="ml-[6px]">File</span>
        <Icon name="edit" className="ml-[16px] h-4 w-4" />
        <span className="ml-[6px]">Edit</span>
        <span className="ml-[215px] w-[516px] whitespace-nowrap text-[#6f6f6f]">Athlete Entries [Competitors: 12 (male: 5 / female: 7)]</span>
        <span className="h-px w-[10px] bg-[#111]" />
        <span className="ml-[34px] h-[10px] w-[10px] rounded-[2px] border border-[#111]" />
        <svg viewBox="0 0 10 10" className="ml-[34px] h-[11px] w-[11px]" aria-hidden="true">
          <path d="M.5.500l9 9M9.500.500l-9 9" stroke="#111" />
        </svg>
      </div>
      <div className="flex h-[26px] shrink-0 items-start pl-[2px] pt-[2px]">
        <div className="h-[21px] w-[264px] border border-[#c4c4c4] bg-white" />
        <div className="ml-[10px] h-[21px] w-[264px] border border-[#c4c4c4] bg-white" />
        <div className="ml-[9px] h-[21px] w-[265px] border border-[#c4c4c4] bg-white" />
        <div className="ml-[10px] flex h-[22px] w-[21px] items-center justify-center rounded-[3px] border border-[#d0d0d0] bg-[#fafafa]">
          <Icon name="filter" />
        </div>
        <Icon name="person" className="ml-[11px] mt-[3px] h-4 w-4 shrink-0" />
        <span className="ml-[4px] mt-[3px] h-[14px] w-[14px] rounded-[2px] border border-[#a8a8a8] bg-white" />
        <span className="ml-[5px] mt-[2px] whitespace-nowrap">Photo preview</span>
      </div>
      <div className="mx-[1px] mt-[1px] flex h-[565px] shrink-0 flex-col border-2 border-[#8ab8e6] bg-white">
        <div className={`relative grid h-[25px] w-[968px] shrink-0 items-center border-b border-[#e4e4e4] ${gridCols}`}>
          {headers.map((h) => (
            <div key={h} className="flex h-full items-center justify-center whitespace-nowrap border-r border-[#e4e4e4] pt-[1px]">{h}</div>
          ))}
          <Icon name="view" className="absolute right-[-10px] top-[5px] h-[10px] w-[10px]" />
        </div>
        {athletes.map((cells, i) => (
          <AthleteRow key={i} cells={cells} selected={i === 10} />
        ))}
      </div>
      <div className="relative flex-1">
        <span className="absolute left-[459px] top-[1px] h-[15px] bg-[#ffff00] px-[1px] leading-[15px]">P: 12 (100%)</span>
        <div className="flex items-start pl-[49px] pt-[19px]">
          <div className="mt-[3px] flex h-[14px] w-[146px] shrink-0 items-center justify-center rounded-[2px] bg-[#2484e0] text-[9px] text-[#d4e6f8]">100 %</div>
          <div className="ml-[50px] -mt-[1px] w-[248px] shrink-0 leading-[26px]">
            <div>12 / 12 Records found (100%)</div>
            <div>Entries selected: 1</div>
          </div>
          <div className="flex flex-col gap-[4px]">
            <div className="flex gap-[4px]">
              {buttonsTop.map((b) => (
                <WinButton key={b.label} label={b.label} icon={b.icon} width="w-[94px]" />
              ))}
            </div>
            <div className="flex gap-[5px]">
              {buttonsBottom.map((b) => (
                <WinButton key={b.label} label={b.label} icon={b.icon} width="w-[118px]" />
              ))}
            </div>
          </div>
        </div>
      </div>
    </div>
  );
}

export default function App() {
  return (
    <div className="relative flex h-[1200px] w-[1720px] flex-col overflow-hidden bg-[#f0f0f0] font-['Noto_Sans',sans-serif] text-[11.500px] leading-[18px] tracking-[-0.15px] text-[#111]">
      <Toolbar />
      <div className="flex h-[1150px] shrink-0">
        <div className="flex w-[1292px] shrink-0 flex-col">
          <div className="flex h-[1005px] shrink-0 pl-[1px]">
            <MainTree />
            <div className="ml-[7px] flex h-[1005px] flex-1 flex-col pr-[6px]">
              <EventsPanel />
              <WelcomePanel />
            </div>
          </div>
          <ConsolePanel />
        </div>
        <RightPanel />
      </div>
      <div className="flex h-[22px] shrink-0 items-center bg-gradient-to-b from-[#d8dade] to-[#e8e9ec] pl-[4px] text-[10px] font-bold tracking-[0.1px]">
        2024-01-23 09:53:30:607 [INFO] Messages found 0
      </div>
      <AthleteWindow />
    </div>
  );
}
